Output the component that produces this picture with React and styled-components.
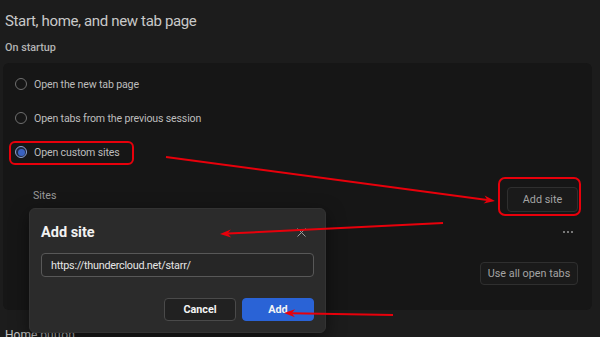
import React from "react";
import styled, { createGlobalStyle } from "styled-components";

const Global = createGlobalStyle`
  html, body { margin: 0; padding: 0; background: #1c1c1c; }
  body { width: 600px; height: 337px; overflow: hidden; font-family: Roboto, "Noto Sans", sans-serif; }
  * { box-sizing: border-box; }
`;

const Page = styled.div`
  position: relative;
  width: 600px;
  height: 337px;
  overflow: hidden;
  background: #1c1c1c;
  display: flex;
  flex-direction: column;
`;

const Title = styled.h1`
  margin: 0;
  padding: 10px 0 0 5px;
  font-size: 15px;
  line-height: 22px;
  font-weight: 400;
  letter-spacing: -0.35px;
  color: #c9c9c9;
`;

const SectionLabel = styled.div`
  margin: 8px 0 0 5px;
  font-size: 10.8px;
  line-height: 16px;
  font-weight: 500;
  color: #b4b4b4;
`;

const Card = styled.section`
  margin: 7px 0 0 3px;
  width: 589px;
  background: #161616;
  border-radius: 6px;
  padding: 4px 14px 25px 0;
  display: flex;
  flex-direction: column;
`;

const RadioRow = styled.label`
  display: flex;
  align-items: center;
  gap: 7px;
  height: 34px;
  padding-left: 12px;
  font-size: 10.6px;
  letter-spacing: -0.15px;
  color: #bdbdbd;
`;

const RadioCircle = styled.span`
  width: 12px;
  height: 12px;
  border-radius: 50%;
  border: 1px solid ${(p) => (p.$on ? "#8ea3d1" : "#6f6f6f")};
  background: ${(p) => (p.$on ? "#1d2740" : "transparent")};
  display: flex;
  align-items: center;
  justify-content: center;
  &::after {
    content: "";
    display: ${(p) => (p.$on ? "block" : "none")};
    width: 7px;
    height: 7px;
    border-radius: 50%;
    background: #3a62c0;
  }
`;

const SitesRow = styled.div`
  margin-top: 18px;
  padding-left: 30px;
  display: flex;
  justify-content: space-between;
  align-items: flex-start;
`;

const SubLabel = styled.div`
  padding-top: 1px;
  font-size: 10.6px;
  line-height: 16px;
  color: #9a9a9a;
`;

const GhostButton = styled.button`
  width: ${(p) => p.$w}px;
  height: ${(p) => p.$h || 25}px;
  padding: 0;
  background: #1a1a1a;
  border: 1px solid #2f2f2f;
  border-radius: 4px;
  color: #a4a4a4;
  font-family: inherit;
  font-size: 10.8px;
`;

const DotsRow = styled.div`
  margin-top: 12px;
  height: 16px;
  display: flex;
  justify-content: flex-end;
  align-items: center;
  padding-right: 5px;
  gap: 2px;
`;

const Dot = styled.span`
  width: 2px;
  height: 2px;
  background: #9a9a9a;
  border-radius: 1px;
`;

const EndRow = styled.div`
  margin-top: 22px;
  display: flex;
  justify-content: flex-end;
`;

const NextHeading = styled.div`
  margin: 16px 0 0 5px;
  font-size: 12px;
  line-height: 18px;
  color: #c4c4c4;
`;

const Dialog = styled.div`
  position: absolute;
  left: 29px;
  top: 208px;
  width: 297px;
  height: 125px;
  background: #2b2b2b;
  border: 1px solid #333;
  border-radius: 6px;
  box-shadow: 0 6px 18px rgba(0, 0, 0, 0.5);
  padding: 13px 11px 11px 11px;
  display: flex;
  flex-direction: column;
`;

const DialogHead = styled.div`
  display: flex;
  justify-content: space-between;
  align-items: center;
  height: 20px;
`;

const DialogTitle = styled.h2`
  margin: 0;
  font-size: 14.5px;
  font-weight: 700;
  color: #f2f2f2;
`;

const Close = styled.span`
  margin-right: 8px;
  display: flex;
`;

const Input = styled.div`
  margin-top: 11px;
  height: 24px;
  border: 1px solid #585858;
  border-radius: 4px;
  background: #262626;
  padding-left: 9px;
  display: flex;
  align-items: center;
  font-size: 10.8px;
  letter-spacing: -0.25px;
  color: #e6e6e6;
`;

const Actions = styled.div`
  margin-top: 21px;
  display: flex;
  justify-content: flex-end;
  gap: 6px;
`;

const DialogButton = styled.button`
  width: 72px;
  height: 23px;
  border-radius: 4px;
  font-family: inherit;
  font-size: 10.8px;
  font-weight: 700;
  color: #f4f4f4;
  background: ${(p) => (p.$primary ? "#2a63d6" : "#212121")};
  border: 1px solid ${(p) => (p.$primary ? "#2a63d6" : "#4a4a4a")};
`;

const Annotations = styled.svg`
  position: absolute;
  left: 0;
  top: 0;
  pointer-events: none;
`;

function Arrow({ x1, y1, x2, y2 }) {
  const a = Math.atan2(y2 - y1, x2 - x1);
  const len = 11;
  const w = 4;
  const bx = x2 - Math.cos(a) * len;
  const by = y2 - Math.sin(a) * len;
  const px = -Math.sin(a) * w;
  const py = Math.cos(a) * w;
  const mx = x2 - Math.cos(a) * (len * 0.7);
  const my = y2 - Math.sin(a) * (len * 0.7);
  return (
    <g>
      <line x1={x1} y1={y1} x2={mx} y2={my} stroke="#e8000b" strokeWidth="2" />
      <polygon
        points={`${x2},${y2} ${bx + px},${by + py} ${mx},${my} ${bx - px},${by - py}`}
        fill="#e8000b"
      />
    </g>
  );
}

export default function App() {
  return (
    <>
      <Global />
      <Page>
        <Title>Start, home, and new tab page</Title>
        <SectionLabel>On startup</SectionLabel>
        <Card>
          <RadioRow>
            <RadioCircle />
            Open the new tab page
          </RadioRow>
          <RadioRow>
            <RadioCircle />
            Open tabs from the previous session
          </RadioRow>
          <RadioRow>
            <RadioCircle $on />
            Open custom sites
          </RadioRow>
          <SitesRow>
            <SubLabel>Sites</SubLabel>
            <GhostButton $w={71}>Add site</GhostButton>
          </SitesRow>
          <DotsRow>
            <Dot />
            <Dot />
            <Dot />
          </DotsRow>
          <EndRow>
            <GhostButton $w={98} $h={23}>Use all open tabs</GhostButton>
          </EndRow>
        </Card>
        <NextHeading>Home button</NextHeading>

        <Dialog>
          <DialogHead>
            <DialogTitle>Add site</DialogTitle>
            <Close>
              <svg width="9" height="9" viewBox="0 0 9 9">
                <path d="M0.5 0.5 L8.5 8.5 M8.5 0.5 L0.5 8.5" stroke="#9c9c9c" strokeWidth="1" />
              </svg>
            </Close>
          </DialogHead>
          <Input>https://thundercloud.net/starr/</Input>
          <Actions>
            <DialogButton>Cancel</DialogButton>
            <DialogButton $primary>Add</DialogButton>
          </Actions>
        </Dialog>

        <Annotations width="600" height="337" viewBox="0 0 600 337">
          <rect x="10" y="142" width="123" height="22" rx="5" fill="none" stroke="#e8000b" strokeWidth="2" />
          <rect x="499" y="178" width="81" height="37" rx="6" fill="none" stroke="#e8000b" strokeWidth="2" />
          <Arrow x1={166} y1={157} x2={495} y2={201} />
          <Arrow x1={443} y1={223} x2={220} y2={234} />
          <Arrow x1={393} y1={315} x2={284} y2={313} />
        </Annotations>
      </Page>
    </>
  );
}
